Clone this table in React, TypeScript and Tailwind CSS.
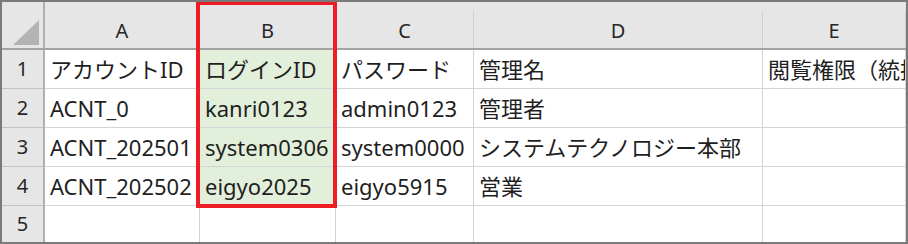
import React from 'react'

const columns = [
  { key: 'A', width: 'w-[155px]', green: false },
  { key: 'B', width: 'w-[136px]', green: true },
  { key: 'C', width: 'w-[138px]', green: false },
  { key: 'D', width: 'w-[289px]', green: false },
  { key: 'E', width: 'w-[143px]', green: false },
]

const rows: string[][] = [
  ['アカウントID', 'ログインID', 'パスワード', '管理名', '閲覧権限（統括）'],
  ['ACNT_0', 'kanri0123', 'admin0123', '管理者', ''],
  ['ACNT_202501', 'system0306', 'system0000', 'システムテクノロジー本部', ''],
  ['ACNT_202502', 'eigyo2025', 'eigyo5915', '営業', ''],
  ['', '', '', '', ''],
]

const font = { fontFamily: '"Noto Sans", "Noto Sans CJK JP", sans-serif' }

export default function App() {
  return (
    <div className="relative w-[908px] h-[244px] bg-white border-2 border-[#7a7a7a] overflow-hidden" style={font}>
      <div className="flex flex-col">
        {/* column header row */}
        <div className="flex h-[48px] bg-[#e6e6e6] border-b-2 border-[#a3a3a3]">
          <div className="w-[43px] shrink-0 flex items-end border-r-2 border-[#b0b0b0]">
            <svg width="41" height="46" viewBox="0 0 41 46" className="block">
              <polygon points="11,43 37,43 37,18" fill="#b3b3b3" />
            </svg>
          </div>
          {columns.map((col) => (
            <div key={col.key} className={`${col.width} shrink-0 flex`}>
              <div className="flex-1 pt-[11px] flex items-center justify-center text-[20px] text-[#262626]">
                {col.key}
              </div>
              <div className="w-px h-[37px] self-end bg-[#cfcfcf]" />
            </div>
          ))}
        </div>

        {rows.map((row, i) => (
          <div key={i} className={`flex ${i === 4 ? 'h-[36px]' : 'h-[39px]'}`}>
            <div
              className={`w-[43px] shrink-0 bg-[#e6e6e6] border-r-2 border-[#b0b0b0] flex items-center justify-center text-[20px] text-[#262626] ${
                i === 4 ? '' : 'border-b border-b-[#c4c4c4]'
              }`}
            >
              {i + 1}
            </div>
            {row.map((cell, j) => (
              <div
                key={j}
                className={`${columns[j].width} shrink-0 flex items-center pl-[5px] text-[22px] leading-none text-[#1f1f1f] whitespace-nowrap overflow-hidden border-r border-[#d4d4d4] ${
                  i === 4 ? '' : 'border-b'
                } ${columns[j].green && i < 4 ? 'bg-[#e2efda]' : ''}`}
              >
                {cell}
              </div>
            ))}
          </div>
        ))}
      </div>

      {/* selection highlight */}
      <div className="absolute left-[194px] top-[-1px] w-[141px] h-[207px] border-4 border-[#ee1c25]" />
    </div>
  )
}
